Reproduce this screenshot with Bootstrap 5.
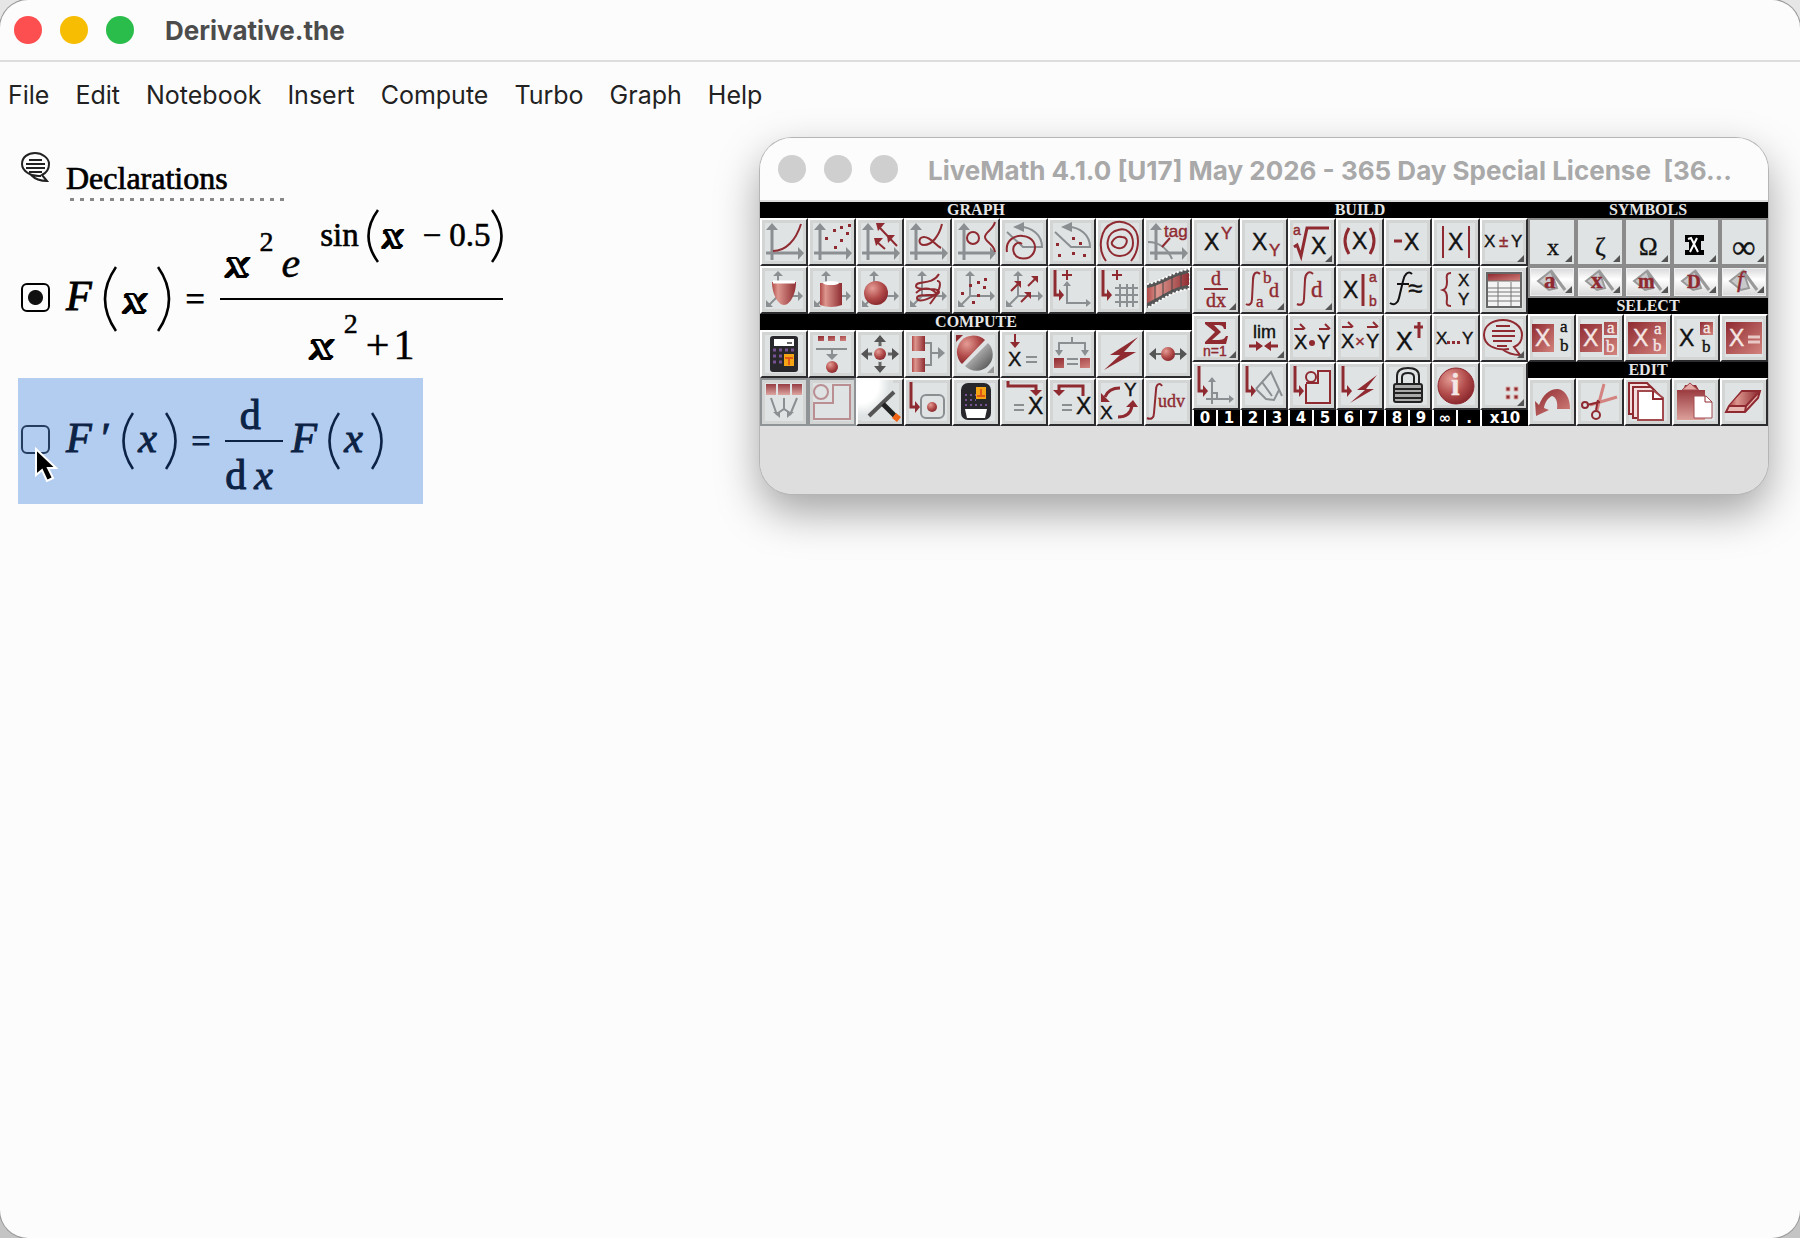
<!DOCTYPE html>
<html lang="en">
<head>
<meta charset="utf-8">
<meta name="viewport" content="width=device-width, initial-scale=1">
<title>Derivative.the</title>
<link href="https://cdn.jsdelivr.net/npm/bootstrap@5.3.0/dist/css/bootstrap.min.css" rel="stylesheet">
<style>
:root{--red:#8f2a31;--gray:#8b8f92;--ink:#000}
body{background:linear-gradient(#e6e6e6,#c4c4c4);font-family:Inter,"Liberation Sans",sans-serif;color:#222}
button{font:inherit;color:inherit}
.app-window{min-height:100vh;background:#fcfcfc;border-radius:28px;overflow:hidden;box-shadow:0 0 0 1px #999}
.titlebar{height:62px;border-bottom:2px solid #ddd;padding:0 14px}
.lamp{width:28px;height:28px;border-radius:50%;border:0;padding:0}
.lamps{gap:18px}
.lamp-red{background:#fd4e50}.lamp-amber{background:#f6bd02}.lamp-green{background:#2bbd4b}.lamp-off{background:#d0cfd0}
.win-title{font-size:26px;line-height:32px;font-weight:700;color:#4c4c4c;margin:0;padding-top:2px}
.titlebar .win-title{margin-left:31px}
.menubar{height:66px;padding:0 8px;gap:26px}
.menubar button{border:0;background:none;padding:0;font-size:25px;line-height:32px;color:#222}
/* notebook */
.notebook{font-family:"Liberation Serif",serif;color:var(--ink);padding:0 18px}
.decl{height:81px;padding:22px 3px 0;gap:16px}
.decl-title{font-size:32px;line-height:36px;font-weight:400;margin:0;padding-top:10px;-webkit-text-stroke:.7px}
.decl-dots{width:214px;height:3px;margin:2px 0 0 4px;background:repeating-linear-gradient(90deg,#888 0 4px,transparent 4px 10px)}
.eq{width:fit-content;padding:0 3px;font-size:42px;line-height:42px}
.eq-one{height:180px;margin-bottom:-11px}
.eq-two{height:126px;padding-right:40px;background:#b3cdf1;--ink:#0c2345;color:var(--ink);position:relative}
.eq-mark{appearance:none;width:29px;height:29px;margin:0 16px 4px 0;border:2px solid var(--ink);border-radius:6px;flex:none;opacity:.85}
.eq-mark:checked{background:radial-gradient(circle,#111 7px,transparent 8px);opacity:1}
.sym{padding-bottom:6px;-webkit-text-stroke:1px}
.fn{width:29px}
.outl{font-family:"DejaVu Serif",serif;font-size:36px;font-weight:700;font-style:italic;color:#fff;-webkit-text-stroke:2px #000;text-shadow:2px 0 0 #000,-2px 0 0 #000,0 2px 0 #000,-2px 2px 0 #000;width:28px;text-align:center;padding:0}
.eqs{font-weight:700;font-size:36px;-webkit-text-stroke:0;padding:0}
.eqgap{margin-left:14px}
.par{fill:none;stroke:var(--ink);stroke-width:2.6;flex:none}
.frac{display:grid;grid-template-rows:89px 2px 89px}
.frac .bar{background:var(--ink)}
.num{padding:0 0 14px 4px}
.den{height:66px}
.num,.den{-webkit-text-stroke:.5px}
.msup{font-size:28px;line-height:28px;margin-bottom:28px}
.mexp{height:54px;margin-bottom:21px;font-size:33px;line-height:32px}
.mexp .sym{padding-bottom:2px;-webkit-text-stroke:.6px}
.mexp .outl{font-size:31px;padding:0;-webkit-text-stroke:2px #000}
.frac-sm{grid-template-rows:62px 2px 62px;width:58px}
.frac-sm .sym{padding:0}
.pointer{position:absolute;left:16px;top:69px}
/* palette window */
.palette{position:absolute;left:760px;top:138px;border-radius:32px;overflow:hidden;background:#dedede;width:1008px;padding-bottom:68px}
.palette-shadow{position:absolute;left:760px;top:138px;width:1008px;height:356px;border-radius:32px;box-shadow:0 0 0 1px #b5b5b5,0 18px 44px rgba(0,0,0,.36)}
.pal-title{height:64px;background:#fcfcfc;padding:0 18px;border-bottom:2px solid #ddd}
.pal-title .win-title{color:#a9a9a9;margin-left:30px;padding-top:4px}
.band{height:16px;background:#000;color:#e6e6e6;font:700 16px/16px "Liberation Serif",serif;text-align:center;margin:0}
.cells{display:grid}
.g9{grid-template-columns:repeat(9,48px)}.g7{grid-template-columns:repeat(7,48px)}.g5{grid-template-columns:repeat(5,48px)}
.tool{width:48px;height:48px;padding:0;border:2px solid;border-color:#fff #2c2c2e #2c2c2e #fff;background:#dfe3e4;box-shadow:inset 0 0 0 3px #d3d5d5;display:block;line-height:0}
.tool svg{margin:-2px;width:48px;height:48px;display:block}
.tool.flat{border-color:#8b8b8c;box-shadow:none}
.tool.off{border-color:#8f9396}
.tool.short{height:32px;border-color:#8b8b8c;background:linear-gradient(#d8d8da,#fff 40%,#d6d6d8);box-shadow:inset 0 0 0 1px #eee}
.tool.short svg{height:32px}
.digits{background:#000}
.digits button{width:24px;height:16px;border:0;border-left:2px solid #fff;background:none;color:#fff;padding:0;font:700 15px/16px "DejaVu Sans",sans-serif;text-align:center}
.digits .wide{width:48px}
svg .r{fill:none;stroke:var(--red);stroke-width:2}
svg .g{fill:none;stroke:var(--gray);stroke-width:2}
svg .rf{fill:var(--red)}svg .gf{fill:var(--gray)}
svg text{font-family:"Liberation Sans",sans-serif;font-size:23px;fill:#111;stroke:#111;stroke-width:.4px}
svg text.t{fill:var(--red);stroke:var(--red)}
svg text.sf{font-family:"Liberation Serif",serif}
svg text.s{font-size:17px}
svg text.xs{font-size:14px}
svg text.w{fill:#f3e6e4;stroke:#f3e6e4}
</style>
<script src="https://cdn.jsdelivr.net/npm/bootstrap@5.3.0/dist/js/bootstrap.bundle.min.js"></script>
</head>
<body>
<svg width="0" height="0" class="position-absolute" aria-hidden="true">
<defs>
<radialGradient id="ball" cx=".35" cy=".3" r=".75"><stop offset="0" stop-color="#e59c95"/><stop offset=".6" stop-color="#b04a49"/><stop offset="1" stop-color="#87262c"/></radialGradient>
<linearGradient id="side" x1="0" x2="1"><stop offset="0" stop-color="#b04a49"/><stop offset=".25" stop-color="#dd968e"/><stop offset="1" stop-color="#8f2d32"/></linearGradient>
<linearGradient id="down" x2="0" y2="1"><stop offset="0" stop-color="#8f2a31"/><stop offset="1" stop-color="#dca09a"/></linearGradient>
<linearGradient id="diag" x2="1" y2="1"><stop offset="0" stop-color="#8f2a31"/><stop offset="1" stop-color="#d3837d"/></linearGradient>
<linearGradient id="graydiag" x2="1" y2="1"><stop offset="0" stop-color="#eee"/><stop offset="1" stop-color="#444"/></linearGradient>
<radialGradient id="glow" cx=".1" cy=".1" r=".8"><stop offset="0" stop-color="#fff"/><stop offset=".6" stop-color="#fff"/><stop offset="1" stop-color="#dfe3e4"/></radialGradient>
<g id="axes"><path d="M12 42V9M6 35h33" fill="none" stroke="#8b8f92" stroke-width="3"/><path d="M6 12l6-7 6 7zM38 29l6 6-6 7z" fill="#8b8f92"/></g>
<g id="axes3"><path d="M18 30V8M18 30h21M18 30L9 39" fill="none" stroke="#8b8f92" stroke-width="2"/><path d="M13 10l5-5 5 5zM38 25l5 5-5 5zM6 34v7h7z" fill="#8b8f92"/></g>
<g id="thin"><path d="M19 18v19h22" fill="none" stroke="#8b8f92" stroke-width="2"/><path d="M15 20l4-5 4 5zM38 33l5 4-5 4z" fill="#8b8f92"/></g>
<g id="elbow"><path d="M7 4v25h6" fill="none" stroke="#8f2a31" stroke-width="3"/><path d="M11 23l5 6-5 6z" fill="#8f2a31"/></g>
<g id="pivot"><path d="M7 14l16 15h19C42 17 32 9 20 9" fill="none" stroke="#8b8f92" stroke-width="2"/><path d="M13 9l11-5v10z" fill="#8b8f92"/></g>
<g id="tri"><path d="M44 37v7h-7z" fill="#555"/></g>
<g id="ne"><path d="M1 9L9 1" stroke="#8f2a31" stroke-width="2"/><path d="M11-1v7L4-1z" fill="#8f2a31"/></g>
<g id="trowel"><path d="M10 16l13-10 6 17-8 2z" fill="#c9c9cb" stroke="#999" stroke-width="2"/><path d="M23 6l14 19" stroke="#999" stroke-width="3"/><path d="M44 21v7h-7z" fill="#555"/></g>
<g id="calc"><rect x="10" y="6" width="28" height="36" rx="3" fill="#28272b"/><path d="M14 9h20v7H14z" fill="#fff"/><path d="M27 13h5" stroke="#666" stroke-width="2"/><path d="M13 20h22M13 26h12M13 32h12" stroke="#765293" stroke-width="3" stroke-dasharray="3 3"/><path d="M24 24h10v12H24z" fill="#f5a414"/><path d="M25 28h8M29 28v7" stroke="#df5a16" stroke-width="2"/></g>
<g id="harp"><path d="M0 5h10M6 0l5 5" fill="none" stroke="#8f2a31" stroke-width="2"/></g>
</defs>
</svg>

<main class="app-window">
  <header class="titlebar d-flex align-items-center">
    <div class="lamps d-flex"><button class="lamp lamp-red" aria-label="Close"></button><button class="lamp lamp-amber" aria-label="Minimize"></button><button class="lamp lamp-green" aria-label="Zoom"></button></div>
    <h1 class="win-title">Derivative.the</h1>
  </header>
  <nav class="menubar d-flex align-items-center" aria-label="Menu">
    <button>File</button><button>Edit</button><button>Notebook</button><button>Insert</button><button>Compute</button><button>Turbo</button><button>Graph</button><button>Help</button>
  </nav>

  <section class="notebook">
    <div class="decl d-flex align-items-start">
      <svg width="29" height="34" viewBox="0 0 29 34" fill="none" stroke="#222" stroke-width="2"><path d="M20 26C10 27 1 21 1 14S7 3 14 3s14 5 14 11c0 5-3 9-7 11l5 6c-6 0-12-2-16-6"/><path d="M8 10h13M5 14h19M5 18h19M8 22h13" stroke-width="2"/></svg>
      <div><h2 class="decl-title">Declarations</h2><div class="decl-dots"></div></div>
    </div>
    <div class="eq eq-one d-flex align-items-center">
      <input class="eq-mark" type="radio" name="current" checked aria-label="Select F(x)">
      <i class="sym fn">F</i>
      <svg class="par ms-2" width="14" height="66" viewBox="0 0 14 66"><path d="M13 1Q-9 33 13 65"/></svg>
      <span class="sym outl ms-1">x</span>
      <svg class="par ms-2" width="14" height="66" viewBox="0 0 14 66"><path d="M1 1Q23 33 1 65"/></svg>
      <span class="sym eqs eqgap">=</span>
      <div class="frac eqgap">
        <div class="num d-flex align-items-end">
          <span class="outl">x</span><span class="msup ms-2 me-2">2</span><i class="me-3">e</i>
          <div class="mexp d-flex align-items-center"><span class="sym ms-1">sin</span>
            <svg class="par ms-2" width="12" height="54" viewBox="0 0 12 54"><path d="M11 1Q-8 27 11 53"/></svg>
            <span class="sym outl">x</span><span class="sym ms-3 me-2">−</span><span class="sym">0.5</span>
            <svg class="par" width="12" height="54" viewBox="0 0 12 54"><path d="M1 1Q20 27 1 53"/></svg>
          </div>
        </div>
        <div class="bar"></div>
        <div class="den d-flex align-items-end justify-content-center"><span class="outl">x</span><span class="msup ms-2 me-2">2</span><span>+</span><span class="ms-1">1</span></div>
      </div>
    </div>
    <div class="eq eq-two d-flex align-items-center">
      <input class="eq-mark" type="radio" name="current" aria-label="Select F'(x)">
      <i class="sym fn">F</i><i class="sym ms-1">′</i>
      <svg class="par eqgap" width="12" height="58" viewBox="0 0 12 58"><path d="M11 1Q-8 29 11 57"/></svg>
      <i class="sym ms-1">x</i>
      <svg class="par ms-2" width="12" height="58" viewBox="0 0 12 58"><path d="M1 1Q20 29 1 57"/></svg>
      <span class="sym eqs eqgap">=</span>
      <div class="frac frac-sm eqgap">
        <div class="d-flex justify-content-center align-items-end pb-1 pe-2"><span class="sym">d</span></div>
        <div class="bar"></div>
        <div class="d-flex pt-2 mt-1"><span class="sym">d</span><i class="sym ms-2">x</i></div>
      </div>
      <i class="sym ms-2 fn">F</i>
      <svg class="par ms-2" width="12" height="58" viewBox="0 0 12 58"><path d="M11 1Q-8 29 11 57"/></svg>
      <i class="sym ms-1">x</i>
      <svg class="par ms-2" width="12" height="58" viewBox="0 0 12 58"><path d="M1 1Q20 29 1 57"/></svg>
      <svg class="pointer" width="24" height="38" viewBox="0 0 24 38"><path d="M2 2v26l6-5 5 11 6-3-5-10h8z" fill="#000" stroke="#fff" stroke-width="2"/></svg>
    </div>
  </section>
</main>

<div class="palette-shadow"></div>
<aside class="palette" aria-label="Tool palette">
  <header class="pal-title d-flex align-items-center">
    <div class="lamps d-flex"><button class="lamp lamp-off" aria-label="Close"></button><button class="lamp lamp-off" aria-label="Minimize"></button><button class="lamp lamp-off" aria-label="Zoom"></button></div>
    <h2 class="win-title text-nowrap">LiveMath 4.1.0 [U17] May 2026 - 365 Day Special License&nbsp; [36...</h2>
  </header>
  <div class="d-flex">
    <div>
      <h3 class="band">GRAPH</h3>
      <div class="cells g9">
        <button class="tool"><svg><use href="#axes"/><path class="r" d="M13 33C26 33 36 22 41 6" stroke-width="3"/></svg></button>
        <button class="tool"><svg><use href="#axes"/><path class="rf" d="M17 19h3v3h-3zM25 11h3v3h-3zM32 8h3v3h-3zM40 6h3v3h-3zM38 14h3v3h-3zM32 21h3v3h-3zM26 28h3v3h-3z"/></svg></button>
        <button class="tool"><svg><use href="#axes"/><path class="r" d="M24 10l17 18M21 24l8 7"/><path class="rf" d="M20 5h9l-7 8zM31 17h8l-7 8zM18 20h9l-7 8z"/></svg></button>
        <button class="tool"><svg><use href="#axes"/><path class="r" d="M38 6C35 18 28 27 20 27c-6 0-6-8 0-8 7 0 11 8 17 11"/></svg></button>
        <button class="tool"><svg><use href="#axes"/><circle class="r" cx="21" cy="20" r="6"/><path class="r" d="M43 4c-2 8-10 10-10 15s9 7 10 15"/></svg></button>
        <button class="tool"><svg><use href="#pivot"/><path class="r" d="M7 34C5 22 15 17 23 18c10 1 14 9 11 16-4 9-17 8-20 1-3-8 4-12 8-9"/></svg></button>
        <button class="tool"><svg><use href="#pivot"/><path class="rf" d="M8 25h3v3H8zM10 36h3v3h-3zM24 19h3v3h-3zM31 24h3v3h-3zM24 34h3v3h-3zM35 36h3v3h-3z"/></svg></button>
        <button class="tool"><svg><path class="r" d="M10 43C1 31 4 10 17 5c10-4 25 2 25 18 0 9-3 15-7 20M22 12c9-3 15 4 15 13 0 8-6 13-13 13-9 0-14-8-12-16 1-5 5-9 10-10zM16 24c2-4 6-6 10-5 4 0 6 3 4 7-2 5-8 5-11 3-2-1-4-3-3-5z"/></svg></button>
        <button class="tool"><svg><use href="#axes"/><path class="g" d="M4 24c12 0 20 8 24 17"/><path class="r" d="M26 20l-8 9"/><text class="t s" x="20" y="19">tag</text></svg></button>

        <button class="tool"><svg><use href="#axes3"/><path d="M12 16h24c0 12-6 23-12 23S12 28 12 16z" fill="url(#side)"/><path d="M13 16h22" stroke="#fff" stroke-width="3"/></svg></button>
        <button class="tool"><svg><use href="#axes3"/><path d="M12 17h22v22q-11 4-22 0z" fill="url(#side)"/><ellipse cx="23" cy="17" rx="8" ry="2" fill="#fff"/></svg></button>
        <button class="tool"><svg><use href="#axes3"/><circle cx="20" cy="27" r="12" fill="url(#ball)"/></svg></button>
        <button class="tool"><svg><use href="#axes3"/><path class="r" d="M35 8C28 20 12 14 12 20s23 0 23 6-22 0-22 6 19 0 22-9-2-8-2-8M12 27c6-6 14-6 20 0M26 38l8-11"/></svg></button>
        <button class="tool"><svg><use href="#axes3"/><path class="rf" d="M25 15h3v3h-3zM32 12h3v3h-3zM31 20h3v3h-3zM9 26h3v3H9zM20 35h3v3h-3zM25 28h3v3h-3zM17 18h3v3h-3z"/></svg></button>
        <button class="tool"><svg><use href="#axes3"/><use href="#ne" x="10" y="16"/><use href="#ne" x="27" y="11"/><use href="#ne" x="20" y="27"/></svg></button>
        <button class="tool"><svg><use href="#elbow"/><use href="#thin"/><path class="r" d="M19 4v10M14 9h10"/></svg></button>
        <button class="tool"><svg><use href="#elbow"/><path class="r" d="M21 4v10M16 9h10"/><path class="g" d="M24 18v23M31 18v23M37 18v23M19 22h23M19 29h23M19 36h23"/></svg></button>
        <button class="tool"><svg><path d="M3 18C16 16 28 6 45 3v20C30 24 18 34 3 42z" fill="#555"/><path d="M3 18C16 16 28 6 45 3v20C30 24 18 34 3 42" fill="none" stroke="#fff" stroke-width="2" stroke-dasharray="2 2"/><path d="M3 22C16 20 28 10 45 7v12C30 20 18 30 3 37z" fill="url(#side)"/><path d="M11 19v15M19 16v14M28 11v14M37 8v13" stroke="#444" stroke-width="1"/></svg></button>
      </div>
      <h3 class="band">COMPUTE</h3>
      <div class="cells g9">
        <button class="tool"><svg><use href="#calc"/></svg></button>
        <button class="tool"><svg><path d="M10 6h6v5h-6zM20 6h7v5h-7zM32 6h6v5h-6z" fill="url(#diag)"/><path class="g" d="M8 19h31M24 19v7"/><path class="gf" d="M18 24h12l-6 6z"/><circle cx="24" cy="37" r="6" fill="url(#ball)"/></svg></button>
        <button class="tool"><svg><path d="M24 8v32M8 24h32" stroke="#666" stroke-width="3"/><path d="M18 12l6-7 6 7zM18 36l6 7 6-7zM12 18l-7 6 7 6zM36 18l7 6-7 6z" fill="#555"/><circle cx="24" cy="24" r="8" fill="#dfe3e4"/><circle cx="24" cy="24" r="6" fill="url(#ball)"/></svg></button>
        <button class="tool"><svg><path d="M8 6h13v15H8zM8 28h13v14H8z" fill="url(#side)"/><path class="g" d="M21 13h6v22h-6M27 23h9"/><path class="gf" d="M34 17l7 6-7 6z"/></svg></button>
        <button class="tool"><svg><path d="M10 34a16 16 0 1 1 23-24z" fill="url(#ball)"/><path d="M13 36a16 16 0 0 0 23-23z" fill="url(#graydiag)"/><path class="rf" d="M4 5h7l-7 7z"/><path d="M42 36v7h-7z" fill="#999"/></svg></button>
        <button class="tool"><svg><path class="r" d="M15 4v10"/><path class="rf" d="M10 12h10l-5 6z"/><text x="8" y="36" style="font-size:20px">X</text><path class="g" d="M26 27h11M26 32h11"/></svg></button>
        <button class="tool"><svg><path class="g" d="M11 23V13h26v10M24 13V7M19 29h11M19 34h11"/><path class="gf" d="M7 20h8l-4 6zM33 20h8l-4 6z"/><path d="M6 28h10v10H6zM32 28h10v10H32z" fill="url(#diag)"/></svg></button>
        <button class="tool"><svg><path class="rf" d="M42 7L14 25h10L8 40l32-18H28z"/></svg></button>
        <button class="tool"><svg><path d="M8 24h32" stroke="#666" stroke-width="2"/><path d="M12 18l-7 6 7 6zM36 18l7 6-7 6z" fill="#555"/><circle cx="24" cy="24" r="7" fill="url(#ball)"/></svg></button>

        <button class="tool off" disabled><svg><path d="M6 6h10v11H6zM18 6h12v11H18zM32 6h10v11H32z" fill="url(#down)" opacity=".9"/><path class="g" d="M11 20l6 17M37 20l-7 17M24 20v12M18 35l6-4 6 4"/><path class="gf" d="M13 34h7v6zM34 34h-7v6z"/></svg></button>
        <button class="tool off" disabled><svg opacity=".45"><circle class="r" cx="13" cy="14" r="7"/><path class="r" d="M25 7h17v34H6V25h19z"/></svg></button>
        <button class="tool"><svg><path d="M2 2h35v40H2z" fill="url(#glow)"/><path d="M13 38l25-24" stroke="#555" stroke-width="4"/><path d="M27 26l12 12" stroke="#222" stroke-width="5"/><path d="M36 40l4-5 5 4-4 5z" fill="#f06415"/></svg></button>
        <button class="tool"><svg><use href="#elbow"/><rect class="g" x="17" y="17" width="23" height="23" rx="5"/><circle cx="28" cy="29" r="5" fill="url(#ball)"/></svg></button>
        <button class="tool"><svg><rect x="9" y="5" width="30" height="37" rx="7" fill="#28272b"/><path d="M13 31h22l-2 9H15z" fill="#fff"/><path d="M13 17h11M13 22h11M13 27h22" stroke="#765293" stroke-width="2" stroke-dasharray="2 3"/><path d="M24 9h10v12H24z" fill="#f5a414"/><path d="M25 18h8M29 11v7" stroke="#df5a16" stroke-width="2"/></svg></button>
        <button class="tool"><svg><path class="r" d="M8 3v5h28v6" style="stroke-width:3"/><path class="rf" d="M30 12h12l-6 6z"/><path class="g" d="M14 27h10M14 32h10"/><text x="28" y="36">X</text></svg></button>
        <button class="tool"><svg><path class="r" d="M35 18V8H11v6" style="stroke-width:3"/><path class="rf" d="M5 12h12l-6 6z"/><path class="g" d="M14 27h10M14 32h10"/><text x="28" y="36">X</text></svg></button>
        <button class="tool"><svg><text x="28" y="18" style="font-size:19px">Y</text><text x="4" y="41" style="font-size:19px">X</text><path class="r" d="M24 10c-8 0-13 4-15 9M22 39c9 0 13-5 14-11" style="stroke-width:3"/><path class="rf" d="M5 15v9h9zM30 29h12l-5-7z"/></svg></button>
        <button class="tool"><svg><path class="r" d="M18 8c-2-4-6-2-6 4L10 35c0 5-3 7-7 5"/><text class="t sf" x="14" y="29" style="font-size:18px">udv</text></svg></button>
      </div>
    </div>
    <div>
      <h3 class="band">BUILD</h3>
      <div class="cells g7">
        <button class="tool"><svg><text x="12" y="32">X</text><text class="t s" x="29" y="21">Y</text></svg></button>
        <button class="tool"><svg><text x="12" y="32">X</text><text class="t s" x="29" y="38">Y</text></svg></button>
        <button class="tool"><svg><text class="t xs" x="5" y="17">a</text><path class="r" d="M6 29l3-2 4 11 6-28h22" style="stroke-width:3"/><text x="23" y="36">X</text><use href="#tri"/></svg></button>
        <button class="tool"><svg><path class="r" d="M13 10q-8 13 0 26M34 10q8 13 0 26" style="stroke-width:3"/><text x="16" y="31">X</text></svg></button>
        <button class="tool"><svg><path class="r" d="M10 23h8" style="stroke-width:3"/><text x="20" y="32">X</text></svg></button>
        <button class="tool"><svg><path class="r" d="M11 8v32M37 8v32"/><text x="16" y="32">X</text></svg></button>
        <button class="tool"><svg><text class="s" x="4" y="29">X</text><text class="t s" x="19" y="29">±</text><text class="s" x="31" y="29">Y</text><use href="#tri"/></svg></button>

        <button class="tool"><svg><text class="t sf" x="19" y="19" style="font-size:20px">d</text><path class="r" d="M12 23h24"/><text class="t sf" x="14" y="41" style="font-size:20px">dx</text><use href="#tri"/></svg></button>
        <button class="tool"><svg><path class="r" d="M20 8c-4-4-7 0-7 6l-1 19c0 5-3 7-6 5"/><text class="t s sf" x="23" y="17">b</text><text class="t s sf" x="16" y="41">a</text><text class="t sf" x="29" y="31" style="font-size:20px">d</text><use href="#tri"/></svg></button>
        <button class="tool"><svg><path class="r" d="M25 8c-4-4-8 0-8 6l-1 19c0 5-3 7-7 5"/><text class="t sf" x="23" y="31">d</text><use href="#tri"/></svg></button>
        <button class="tool"><svg><text x="7" y="32">X</text><path class="r" d="M27 8v32" style="stroke-width:3"/><text class="t xs" x="33" y="16">a</text><text class="t xs" x="33" y="40">b</text></svg></button>
        <button class="tool"><svg><path d="M28 8c-4-4-8 1-9 7l-4 17c-1 5-5 8-9 5M13 18h12" fill="none" stroke="#111" stroke-width="2"/><text x="24" y="31" style="font-size:26px">≈</text></svg></button>
        <button class="tool"><svg><path class="r" d="M19 7c-6 0-4 5-4 9 0 5-1 7-4 8 3 1 4 3 4 8 0 4-2 8 4 8"/><text class="s" x="26" y="20">X</text><text class="s" x="26" y="39">Y</text></svg></button>
        <button class="tool"><svg><rect x="7" y="7" width="34" height="34" fill="#f4f4f4" stroke="#666" stroke-width="2"/><path d="M8 8h32v7H8z" fill="url(#diag)"/><path d="M8 15h32M18 16v24M31 16v24M8 22h32M8 26h32M8 30h32M8 35h32" stroke="#777" stroke-width="1"/></svg></button>

        <button class="tool"><svg><path class="rf" d="M13 8h21v7h-2c-1-4-3-4-10-4l7 7-9 8c10 0 12 0 14-4h2l-2 8H13v-2l10-10-10-8z"/><text class="t xs" x="11" y="42">n=1</text><use href="#tri"/></svg></button>
        <button class="tool"><svg><text x="13" y="24" style="font-size:18px">lim</text><path class="r" d="M9 32h10M28 32h10" style="stroke-width:3"/><path class="rf" d="M16 27l7 5-7 5zM31 27l-7 5 7 5z"/><use href="#tri"/></svg></button>
        <button class="tool"><svg><use href="#harp" x="6" y="10"/><use href="#harp" x="31" y="10"/><text x="6" y="35" style="font-size:20px">X</text><circle class="rf" cx="24" cy="29" r="3"/><text x="29" y="35" style="font-size:20px">Y</text></svg></button>
        <button class="tool"><svg><use href="#harp" x="6" y="8"/><use href="#harp" x="31" y="8"/><text x="5" y="34" style="font-size:20px">X</text><text class="t s" x="19" y="33">×</text><text x="30" y="34" style="font-size:20px">Y</text></svg></button>
        <button class="tool"><svg><text x="12" y="36" style="font-size:25px">X</text><path class="r" d="M35 8v16M30 13h9" style="stroke-width:3"/></svg></button>
        <button class="tool"><svg><text class="s" x="4" y="30">X</text><path class="rf" d="M15 27h3v3h-3zM20 27h3v3h-3zM25 27h3v3h-3z"/><text class="s" x="30" y="30">Y</text></svg></button>
        <button class="tool"><svg><path class="r" d="M29 35C15 37 4 31 4 21S13 6 23 6s19 6 19 15c0 6-3 10-8 12l6 8c-8 0-13-2-18-6M16 12h14M12 17h23M12 22h23M13 27h19M17 32h10"/><use href="#tri"/></svg></button>

        <button class="tool"><svg><use href="#elbow"/><path class="g" d="M20 18v24M14 37h26M20 31h5v6"/><path class="gf" d="M16 20l4-5 4 5zM37 33l5 4-5 4z"/></svg></button>
        <button class="tool"><svg><use href="#elbow"/><path class="g" d="M16 27L31 10 42 34M16 27l10 10 8 1 5-10M22 20l10 14"/></svg></button>
        <button class="tool"><svg><use href="#elbow"/><circle class="r" cx="23" cy="15" r="5"/><path class="r" d="M18 22v19h24V9H30v12H18"/></svg></button>
        <button class="tool"><svg><use href="#elbow"/><path class="rf" d="M41 13L21 28h8L14 41l24-14h-8z"/></svg></button>
        <button class="tool"><svg><path d="M13 23v-9q0-8 11-8t11 8v9M18 23v-8q0-4 6-4t6 4v8" fill="none" stroke="#222" stroke-width="2"/><rect x="10" y="22" width="28" height="18" rx="2" fill="#aaa" stroke="#222" stroke-width="2"/><path d="M10 27h28M10 31h28M10 36h28" stroke="#222" stroke-width="2"/></svg></button>
        <button class="tool"><svg><circle cx="24" cy="24" r="18" fill="url(#ball)" stroke="#8f2a31" stroke-width="1"/><text x="19" y="33" class="sf w" style="font-weight:700;font-size:31px">i</text></svg></button>
        <button class="tool"><svg><path class="rf" d="M26 25h4v4h-4zM34 25h4v4h-4zM26 33h4v4h-4zM34 33h4v4h-4z" stroke="#dba9a6"/><use href="#tri"/></svg></button>
      </div>
      <div class="digits d-flex">
        <button>0</button><button>1</button><button>2</button><button>3</button><button>4</button><button>5</button><button>6</button><button>7</button><button>8</button><button>9</button><button>∞</button><button>.</button><button class="wide">x10</button>
      </div>
    </div>
    <div>
      <h3 class="band">SYMBOLS</h3>
      <div class="cells g5">
        <button class="tool flat"><svg><text class="sf" x="19" y="37" style="font-size:24px">x</text><use href="#tri"/></svg></button>
        <button class="tool flat"><svg><text class="sf" x="19" y="37" style="font-size:26px">ζ</text><use href="#tri"/></svg></button>
        <button class="tool flat"><svg><text class="sf" x="15" y="37" style="font-size:25px">Ω</text><use href="#tri"/></svg></button>
        <button class="tool flat"><svg><path d="M13 17h19v6h-3v9h3v5H13v-5h4v-8h-4z"/><path d="M16 21l3-1 7 14M25 20l-7 14" fill="none" stroke="#fff" stroke-width="2"/><use href="#tri"/></svg></button>
        <button class="tool flat"><svg><text class="sf" x="12" y="40" style="font-size:33px">∞</text><use href="#tri"/></svg></button>
        <button class="tool short"><svg><use href="#trowel" y="-1"/><text class="t sf" x="16" y="22" style="font-weight:700">a</text></svg></button>
        <button class="tool short"><svg><use href="#trowel" y="-1"/><text class="t sf" x="15" y="22" style="font-weight:700">x</text></svg></button>
        <button class="tool short"><svg><use href="#trowel" y="-1"/><text class="t sf" x="14" y="22" style="font-weight:700;font-size:20px">m</text></svg></button>
        <button class="tool short"><svg><use href="#trowel" y="-1"/><text class="t sf" x="15" y="22" style="font-weight:700;font-size:19px">D</text></svg></button>
        <button class="tool short"><svg><use href="#trowel" y="-1"/><text class="t sf" x="17" y="21" style="font-style:italic;font-size:24px">f</text></svg></button>
      </div>
      <h3 class="band">SELECT</h3>
      <div class="cells g5">
        <button class="tool"><svg><path d="M4 10h22v28H4z" fill="url(#diag)"/><text class="w" x="7" y="32">X</text><text class="sf s" x="32" y="18">a</text><text class="sf s" x="32" y="37">b</text></svg></button>
        <button class="tool"><svg><path d="M4 10h22v28H4zM28 8h13v13H28zM28 24h13v17H28z" fill="url(#diag)"/><text class="w" x="7" y="32">X</text><text class="w s sf" x="31" y="19">a</text><text class="w s sf" x="30" y="38">b</text></svg></button>
        <button class="tool"><svg><path d="M4 8h38v32H4z" fill="url(#diag)"/><text class="w" x="9" y="32">X</text><text class="w s sf" x="30" y="20">a</text><text class="w s sf" x="29" y="37">b</text></svg></button>
        <button class="tool"><svg><path d="M28 8h13v13H28z" fill="url(#diag)"/><text x="7" y="32">X</text><text class="w s sf" x="31" y="19">a</text><text class="sf s" x="30" y="38">b</text></svg></button>
        <button class="tool"><svg><path d="M6 8h36v32H6z" fill="url(#diag)"/><text class="w" x="9" y="32">X</text><path d="M28 23h12M28 28h12" stroke="#e9c9c6" stroke-width="3"/></svg></button>
      </div>
      <h3 class="band">EDIT</h3>
      <div class="cells g5">
        <button class="tool"><svg><path d="M7 23l4 4c4-10 10-16 19-16 8 1 12 10 12 20H29c1-7-1-12-5-13-4 2-7 6-8 12l5 2-13 6z" fill="url(#diag)"/></svg></button>
        <button class="tool"><svg><path d="M28 6l-7 26M41 19L14 27" fill="none" stroke="#d38480" stroke-width="3"/><path class="r" d="M22 22l-2 10M24 24l-13 3"/><circle class="r" cx="9" cy="27" r="3"/><circle class="r" cx="20" cy="37" r="4"/></svg></button>
        <button class="tool"><svg><g fill="#f3dedd" stroke="#8f2a31" stroke-width="2"><path d="M5 5h18l8 8v23H5z"/><path d="M9 9h18l8 8v23H9z"/></g><path d="M14 13h16l9 7v22H14z" fill="#fff" stroke="#a34a4e" stroke-width="2"/><path class="r" d="M29 13v8h10"/></svg></button>
        <button class="tool"><svg><path d="M5 12h6l2-5h11l3 5h6v30H5z" fill="url(#down)"/><path d="M10 12l8-7 8 7z" fill="#e4a9a4" stroke="#a34a4e"/><path d="M22 18h12l6 6v16H22z" fill="#fff" stroke="#a34a4e" stroke-width="1"/><path class="r" d="M33 18v6h7" style="stroke-width:1"/></svg></button>
        <button class="tool"><svg><path d="M6 34l3-6L22 13h18l-2 7-13 14z" fill="#e8b7b2" stroke="#8f2a31" stroke-width="2"/><path d="M10 27L22 14h16L27 27z" fill="url(#side)"/><path d="M9 28h17l-1 6M26 28L39 14" fill="none" stroke="#8f2a31" stroke-width="2"/></svg></button>
      </div>
    </div>
  </div>
</aside>
</body>
</html>
